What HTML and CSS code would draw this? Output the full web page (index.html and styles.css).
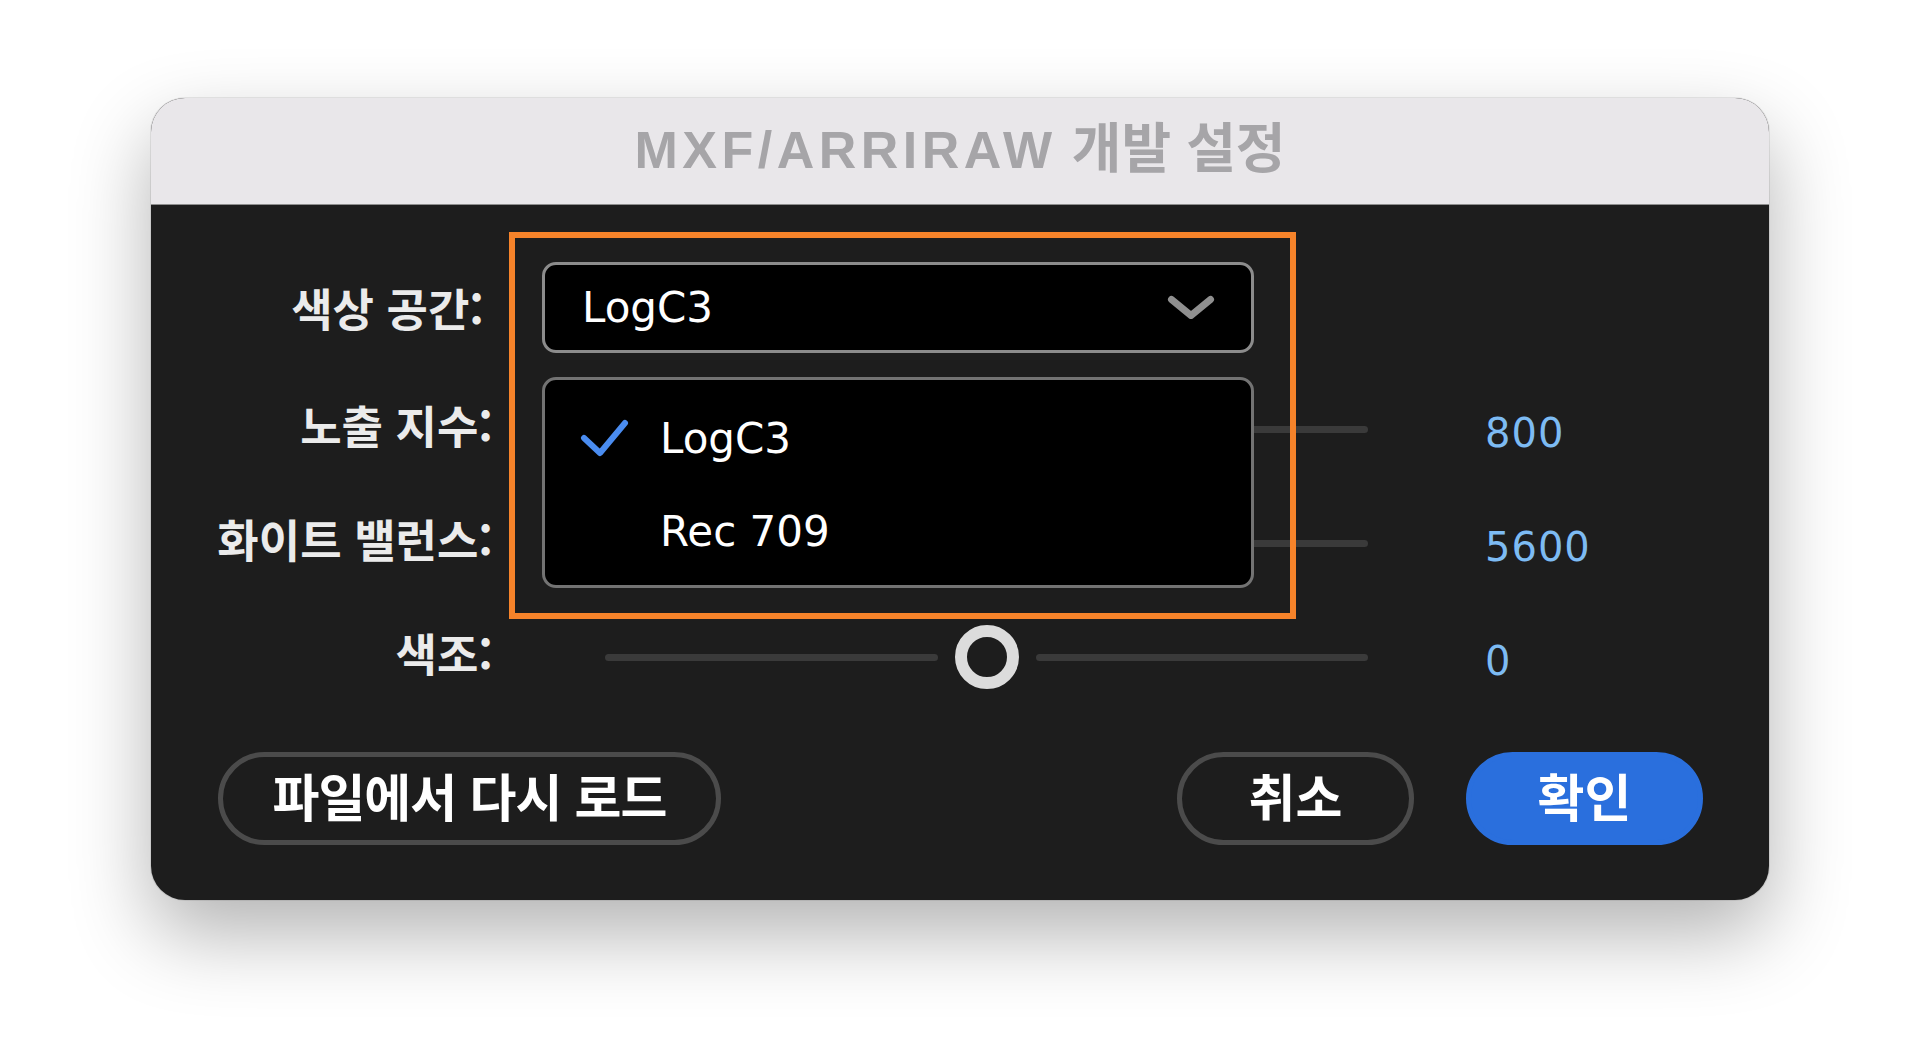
FILE: index.html
```html
<!DOCTYPE html>
<html lang="ko">
<head>
<meta charset="utf-8">
<title>MXF/ARRIRAW 개발 설정</title>
<link rel="stylesheet" href="styles.css">
</head>
<body>
<div class="page">
  <div class="dialog">
    <div class="titlebar">
      <h1 class="title"><span class="title-latin">MXF/ARRIRAW</span> 개발 설정</h1>
    </div>
    <div class="body">
      <div class="row row-select">
        <div class="label label-first">색상 공간:</div>
        <div class="select">
          <span class="select-text">LogC3</span>
          <svg class="chevron" width="52" height="30" viewBox="0 0 52 30"><path d="M6.5 6.5 L26 22.5 L45.5 6.5" fill="none" stroke="#8f8f8f" stroke-width="7" stroke-linecap="round" stroke-linejoin="round"/></svg>
        </div>
        <div class="value"></div>
      </div>
      <div class="row">
        <div class="label">노출 지수:</div>
        <div class="slider">
          <div class="seg" style="flex-grow:0.3"></div>
          <div class="thumb"></div>
          <div class="seg" style="flex-grow:0.7"></div>
        </div>
        <div class="value">800</div>
      </div>
      <div class="row">
        <div class="label">화이트 밸런스:</div>
        <div class="slider">
          <div class="seg" style="flex-grow:0.45"></div>
          <div class="thumb"></div>
          <div class="seg" style="flex-grow:0.55"></div>
        </div>
        <div class="value">5600</div>
      </div>
      <div class="row">
        <div class="label">색조:</div>
        <div class="slider">
          <div class="seg" style="flex-grow:0.5"></div>
          <div class="thumb"></div>
          <div class="seg" style="flex-grow:0.5"></div>
        </div>
        <div class="value">0</div>
      </div>
      <div class="actions">
        <button class="btn btn-wide">파일에서 다시 로드</button>
        <button class="btn btn-small">취소</button>
        <button class="btn btn-small btn-primary">확인</button>
      </div>
    </div>
    <div class="menu">
      <div class="menu-item">
        <svg class="check" width="50" height="40" viewBox="0 0 50 40"><path d="M5 19 L21 34 L46 4" fill="none" stroke="#4a8cf0" stroke-width="6" stroke-linecap="round" stroke-linejoin="round"/></svg>
        <span>LogC3</span>
      </div>
      <div class="menu-item">
        <span class="check"></span>
        <span>Rec 709</span>
      </div>
    </div>
    <div class="highlight"></div>
  </div>
</div>
</body>
</html>
```

FILE: styles.css
```css
html, body {
  margin: 0;
  padding: 0;
  background: #ffffff;
}

body {
  font-family: "Noto Sans CJK KR", sans-serif;
}

.page {
  display: flex;
  justify-content: center;
  align-items: flex-start;
  box-sizing: border-box;
  min-height: 1060px;
  padding-top: 98px;
}

.dialog {
  position: relative;
  width: 1618px;
  height: 802px;
  border-radius: 34px;
  overflow: hidden;
  background: #1d1d1d;
  display: flex;
  flex-direction: column;
  box-shadow: 0 34px 80px rgba(0, 0, 0, 0.3), 0 0 0 1px rgba(0, 0, 0, 0.08);
}

.titlebar {
  height: 107px;
  flex: none;
  background: #e9e7ea;
  display: flex;
  align-items: center;
  justify-content: center;
  box-sizing: border-box;
  border-bottom: 1px solid #8e8e8e;
  padding-bottom: 8px;
}

.title {
  margin: 0;
  font-family: "Noto Sans CJK KR", sans-serif;
  font-size: 54px;
  font-weight: 700;
  color: #a6a5a8;
  line-height: 1;
  white-space: nowrap;
}

.title-latin {
  font-family: "Liberation Sans", "Noto Sans CJK KR", sans-serif;
  font-size: 52px;
  letter-spacing: 4.5px;
}

.body {
  flex: 1;
  display: flex;
  flex-direction: column;
  padding: 57px 66px 55px 60px;
}

.row {
  display: grid;
  grid-template-columns: 282px 826px 1fr;
  column-gap: 49px;
  align-items: center;
  height: 114px;
}

.row-select {
  height: 91px;
  margin-bottom: 19px;
}

.label {
  text-align: right;
  font-size: 45px;
  font-weight: 600;
  color: #ebebeb;
  line-height: 1;
  margin-bottom: 10px;
  white-space: nowrap;
}

.label-first {
  padding-right: 9px;
  margin-bottom: 0;
}

.select {
  width: 712px;
  height: 91px;
  box-sizing: border-box;
  border: 3px solid #8c8c8c;
  border-radius: 14px;
  background: #000;
  display: flex;
  align-items: center;
  justify-content: space-between;
  padding: 0 34px 0 37px;
  color: #ffffff;
  font-family: "DejaVu Sans", sans-serif;
  font-size: 42px;
}

.chevron {
  flex: none;
}

.slider {
  margin-left: 63px;
  display: flex;
  align-items: center;
  gap: 17px;
}

.seg {
  height: 7px;
  border-radius: 4px;
  background: #3a3a3a;
  flex-basis: 0;
}

.thumb {
  flex: none;
  width: 64px;
  height: 64px;
  box-sizing: border-box;
  border: 12px solid #dcdcdc;
  border-radius: 50%;
}

.value {
  padding-left: 68px;
  margin-top: 8px;
  font-family: "DejaVu Sans", sans-serif;
  font-size: 40px;
  letter-spacing: 1px;
  color: #7dbbf3;
  line-height: 1;
}

.actions {
  display: flex;
  align-items: center;
  margin: 38px 0 0 7px;
}

.btn {
  height: 93px;
  box-sizing: border-box;
  border-radius: 47px;
  border: 5px solid #4b4b4b;
  background: transparent;
  color: #ffffff;
  font-family: "Noto Sans CJK KR", sans-serif;
  font-size: 51px;
  font-weight: 700;
  padding: 0 0 6px;
  display: flex;
  align-items: center;
  justify-content: center;
  line-height: 1;
  white-space: nowrap;
}

.btn-wide {
  width: 503px;
  letter-spacing: -1px;
  margin-right: auto;
}

.btn-small {
  width: 237px;
}

.btn-primary {
  background: #2a6fdd;
  border-color: #2a6fdd;
  margin-left: 52px;
}

.menu {
  position: absolute;
  left: 391px;
  top: 279px;
  width: 712px;
  height: 211px;
  box-sizing: border-box;
  border: 3px solid #737373;
  border-radius: 14px;
  background: #000;
  padding-top: 12px;
}

.menu-item {
  height: 93px;
  display: flex;
  align-items: center;
  padding-left: 34px;
  color: #ffffff;
  font-family: "DejaVu Sans", sans-serif;
  font-size: 42px;
}

.check {
  flex: none;
  width: 50px;
  height: 40px;
  margin-right: 31px;
}

.highlight {
  position: absolute;
  left: 358px;
  top: 134px;
  width: 787px;
  height: 387px;
  box-sizing: border-box;
  border: 6px solid #f6832a;
  pointer-events: none;
}
```
